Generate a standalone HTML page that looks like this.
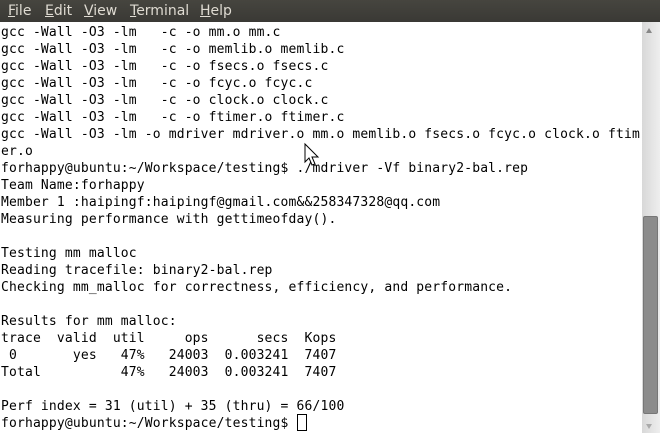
<!DOCTYPE html>
<html><head><style>
body{margin:0;width:660px;height:433px;overflow:hidden;background:#fff;position:relative;}
.menu{position:absolute;left:0;top:0;width:660px;height:22px;background:linear-gradient(#46453f,#3a3935);font:14px "DejaVu Sans","Liberation Sans",sans-serif;color:#dfdbd2;}
.menu span{position:absolute;top:3px;}
.menu u{text-decoration:underline;}
pre{position:absolute;left:1px;top:24px;margin:0;font:13px/17px "DejaVu Sans Mono","Liberation Mono",monospace;letter-spacing:0.16px;color:#000;}
.sb{position:absolute;left:642px;top:22px;width:18px;height:411px;background:linear-gradient(90deg,#d8d8d8,#eee);}
.thumb{position:absolute;left:643px;top:216px;width:15px;height:198px;background:#8c8c8c;border:1px solid #777;border-radius:2px;box-sizing:border-box;}
.cur{position:absolute;left:297px;top:414px;width:10px;height:17px;border:1px solid #000;box-sizing:border-box;}
</style></head><body>
<div class="menu"><span style="left:8px"><u>F</u>ile</span><span style="left:45px"><u>E</u>dit</span><span style="left:84px"><u>V</u>iew</span><span style="left:130px"><u>T</u>erminal</span><span style="left:200px"><u>H</u>elp</span></div>
<pre>gcc -Wall -O3 -lm   -c -o mm.o mm.c
gcc -Wall -O3 -lm   -c -o memlib.o memlib.c
gcc -Wall -O3 -lm   -c -o fsecs.o fsecs.c
gcc -Wall -O3 -lm   -c -o fcyc.o fcyc.c
gcc -Wall -O3 -lm   -c -o clock.o clock.c
gcc -Wall -O3 -lm   -c -o ftimer.o ftimer.c
gcc -Wall -O3 -lm -o mdriver mdriver.o mm.o memlib.o fsecs.o fcyc.o clock.o ftim
er.o
forhappy@ubuntu:~/Workspace/testing$ ./mdriver -Vf binary2-bal.rep
Team Name:forhappy
Member 1 :haipingf:haipingf@gmail.com&amp;&amp;258347328@qq.com
Measuring performance with gettimeofday().

Testing mm malloc
Reading tracefile: binary2-bal.rep
Checking mm_malloc for correctness, efficiency, and performance.

Results for mm malloc:
trace  valid  util     ops      secs  Kops
 0       yes   47%   24003  0.003241  7407
Total          47%   24003  0.003241  7407

Perf index = 31 (util) + 35 (thru) = 66/100
forhappy@ubuntu:~/Workspace/testing$ </pre>
<div class="cur"></div>
<div class="sb"></div>
<div class="thumb"></div>
<svg style="position:absolute;left:0;top:0" width="660" height="433"><path d="M646 33l3-5 3 5z" fill="#888"/><path d="M646 424l3 5 3-5z" fill="#aaa"/><path d="M305 144v18l4-4 3 7 3-1-3-7h6z" fill="#fff" stroke="#000" stroke-width="1"/></svg>
</body></html>
